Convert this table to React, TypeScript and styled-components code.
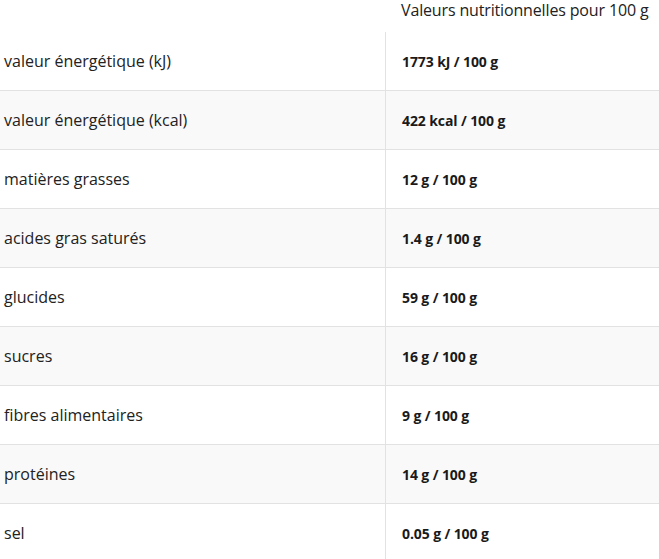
import React from "react";
import styled, { createGlobalStyle } from "styled-components";

const Global = createGlobalStyle`
  html, body { margin: 0; padding: 0; background: #fff; }
  body { font-family: "Open Sans", "Noto Sans", sans-serif; color: #222; }
`;

const Table = styled.div`
  display: grid;
  grid-template-columns: 385px 1fr;
  width: 659px;
`;

const HeadCell = styled.div`
  height: 32px;
  padding-left: 16px;
  font-size: 16px;
  line-height: 20px;
  letter-spacing: -0.15px;
  color: #222;
  box-sizing: border-box;
`;

const LabelCell = styled.div<{ $alt: boolean; $first: boolean }>`
  height: ${(p) => (p.$first ? "58px" : "59px")};
  box-sizing: border-box;
  display: flex;
  align-items: center;
  padding-left: 4px;
  font-size: 16px;
  color: #222;
  background: ${(p) => (p.$alt ? "#f9f9f9" : "#fff")};
  border-top: ${(p) => (p.$first ? "none" : "1px solid #e2e2e2")};
`;

const ValueCell = styled(LabelCell)`
  padding-left: 16px;
  font-size: 14px;
  font-weight: 700;
  letter-spacing: -0.1px;
  color: #1a1a1a;
  border-left: 1px solid #e2e2e2;
`;

const rows: [string, string][] = [
  ["valeur énergétique (kJ)", "1773 kJ / 100 g"],
  ["valeur énergétique (kcal)", "422 kcal / 100 g"],
  ["matières grasses", "12 g / 100 g"],
  ["acides gras saturés", "1.4 g / 100 g"],
  ["glucides", "59 g / 100 g"],
  ["sucres", "16 g / 100 g"],
  ["fibres alimentaires", "9 g / 100 g"],
  ["protéines", "14 g / 100 g"],
  ["sel", "0.05 g / 100 g"],
];

export default function App() {
  return (
    <>
      <Global />
      <Table>
        <HeadCell />
        <HeadCell>Valeurs nutritionnelles pour 100 g</HeadCell>
        {rows.map(([label, value], i) => (
          <React.Fragment key={label}>
            <LabelCell $alt={i % 2 === 1} $first={i === 0}>{label}</LabelCell>
            <ValueCell $alt={i % 2 === 1} $first={i === 0}>{value}</ValueCell>
          </React.Fragment>
        ))}
      </Table>
    </>
  );
}
